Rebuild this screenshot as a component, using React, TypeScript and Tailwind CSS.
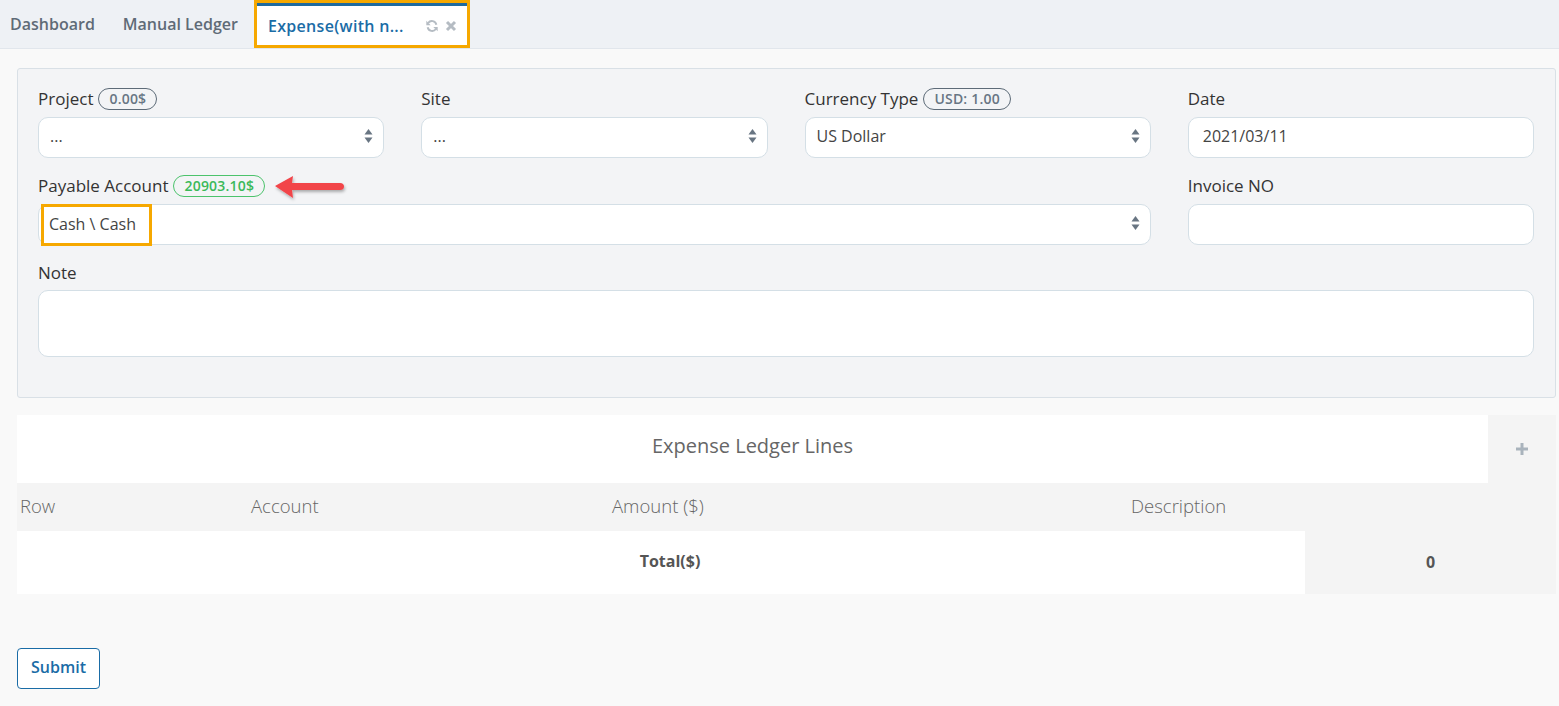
import React from "react";

const font = { fontFamily: "'Open Sans', Lato, sans-serif" };

const Arrows = () => (
  <svg width="9" height="16" viewBox="0 0 9 16" className="shrink-0">
    <path d="M4.5 1 L8.5 6.5 L0.5 6.5 Z" fill="#687582" />
    <path d="M4.5 15 L8.5 9.5 L0.5 9.5 Z" fill="#687582" />
  </svg>
);

const Pill = ({ text, green }: { text: string; green?: boolean }) => (
  <span
    className={
      "ml-[5px] inline-flex h-[22px] items-center rounded-full border px-[10px] pb-[1px] text-[14px] font-semibold tracking-[0.2px] " +
      (green
        ? "border-[#4cc36c] text-[#3bb95a]"
        : "border-[#5d6b78] text-[#687684]")
    }
  >
    {text}
  </span>
);

const Label = ({ children }: { children: React.ReactNode }) => (
  <div className="flex h-[18px] items-center text-[17px] text-[#333]">
    {children}
  </div>
);

const Select = ({ value }: { value: string }) => (
  <div className="mt-[9px] flex h-[41px] items-center justify-between rounded-[10px] border border-[#d4dfe6] bg-white pb-[3px] pl-[11px] pr-[10px] text-[16px] text-[#444]">
    <span>{value}</span>
    <Arrows />
  </div>
);

const Input = ({ value = "" }: { value?: string }) => (
  <div className="mt-[9px] flex h-[41px] items-center rounded-[10px] border border-[#d4dfe6] bg-white pb-[3px] pl-[14px] text-[16px] text-[#444]">
    {value}
  </div>
);

export default function App() {
  return (
    <div className="min-h-[706px] bg-[#f9f9f9]" style={font}>
      {/* tabs */}
      <div className="flex h-[49px] items-stretch border-b border-[#e1e6ec] bg-[#eef1f5] pl-[10px]">
        <div className="flex items-center text-[16px] font-semibold text-[#5f6b77]">
          Dashboard
        </div>
        <div className="ml-[28px] flex items-center text-[16px] font-semibold text-[#5f6b77]">
          Manual Ledger
        </div>
        <div className="ml-[16px] flex h-[48px] w-[216px] flex-col border-[3px] border-[#f6a800] bg-white">
          <div className="h-[3px] bg-[#1f6a9f]" />
          <div className="flex flex-1 items-center pl-[11px] pr-[10px]">
            <span className="text-[16px] font-semibold tracking-[0.3px] text-[#1a6ca6]">
              Expense(with n...
            </span>
            <svg width="14" height="14" viewBox="0 0 16 16" className="ml-auto">
              <path
                d="M13 6.5A5.2 5.2 0 0 0 3.6 4.6M3 9.5a5.2 5.2 0 0 0 9.4 1.9"
                stroke="#b5bcc3"
                strokeWidth="2.2"
                fill="none"
              />
              <path d="M1.5 2v5h5z" fill="#b5bcc3" />
              <path d="M14.5 14v-5h-5z" fill="#b5bcc3" />
            </svg>
            <svg width="12" height="12" viewBox="0 0 12 12" className="ml-[6px]">
              <path d="M2 2l8 8M10 2l-8 8" stroke="#b5bcc3" strokeWidth="3" />
            </svg>
          </div>
        </div>
      </div>

      <div className="pl-[17px] pr-[3px] pt-[19px]">
        {/* form panel */}
        <div className="relative rounded-[3px] border border-[#d9e0e6] bg-[#f3f4f6] pb-[40px] pl-[20px] pr-[21px] pt-[21px]">
          <div className="grid grid-cols-4 gap-x-[37px]">
            <div>
              <Label>
                Project <Pill text="0.00$" />
              </Label>
              <Select value="..." />
            </div>
            <div>
              <Label>Site</Label>
              <Select value="..." />
            </div>
            <div>
              <Label>
                Currency Type <Pill text="USD: 1.00" />
              </Label>
              <Select value="US Dollar" />
            </div>
            <div>
              <Label>Date</Label>
              <Input value="2021/03/11" />
            </div>

            <div className="col-span-3 mt-[19px]">
              <Label>
                Payable Account <Pill text="20903.10$" green />
                <svg width="80" height="30" viewBox="0 0 80 30" className="ml-[8px] mt-[4px]">
                  <defs>
                    <filter id="sh" x="-20%" y="-40%" width="140%" height="180%">
                      <feDropShadow dx="1" dy="2" stdDeviation="1.5" floodColor="#000" floodOpacity="0.3" />
                    </filter>
                  </defs>
                  <g filter="url(#sh)">
                    <path d="M2 13 L20 3 L19 10 L67 10 Q71 10 71 13.5 Q71 17 67 17 L19 17 L20 25 Z" fill="#f2444a" />
                  </g>
                </svg>
              </Label>
              <div className="relative">
                <Select value="" />
                <div className="absolute left-[3px] top-[0px] flex h-[42px] w-[111px] items-center border-[3px] border-[#f6a800] bg-white pb-[2px] pl-[5px] text-[16px] text-[#444]">
                  Cash \ Cash
                </div>
              </div>
            </div>
            <div className="mt-[19px]">
              <Label>Invoice NO</Label>
              <Input />
            </div>

            <div className="col-span-4 mt-[19px]">
              <Label>Note</Label>
              <div className="mt-[8px] h-[67px] rounded-[10px] border border-[#d4dfe6] bg-white" />
            </div>
          </div>
        </div>

        {/* ledger lines */}
        <div className="mt-[17px]">
          <div className="flex h-[68px]">
            <div className="flex flex-1 items-center justify-center bg-white pb-[6px] text-[20px] text-[#666]">
              Expense Ledger Lines
            </div>
            <div className="flex w-[68px] items-center justify-center bg-[#f4f4f4]">
              <svg width="14" height="14" viewBox="0 0 14 14">
                <path d="M7 1v12M1 7h12" stroke="#a9b3bc" strokeWidth="3" />
              </svg>
            </div>
          </div>
          <div className="grid h-[48px] grid-cols-[231px_361px_519px_1fr] items-center bg-[#f4f4f4] pb-[2px] pl-[3px] text-[18.5px] font-light text-[#666]">
            <div>Row</div>
            <div>Account</div>
            <div>Amount ($)</div>
            <div>Description</div>
          </div>
          <div className="flex h-[63px]">
            <div className="flex w-[1288px] items-center justify-center bg-white pb-[3px] pl-[18px] text-[16px] font-bold text-[#555]">
              Total($)
            </div>
            <div className="flex flex-1 items-center justify-center bg-[#f4f4f4] pb-[2px] text-[16px] font-bold text-[#555]">
              0
            </div>
          </div>
        </div>

        <button className="mt-[54px] h-[41px] w-[83px] rounded-[4px] border border-[#1a6ca6] bg-white pb-[4px] text-[16px] font-semibold text-[#1a6ca6]">
          Submit
        </button>
      </div>
    </div>
  );
}
